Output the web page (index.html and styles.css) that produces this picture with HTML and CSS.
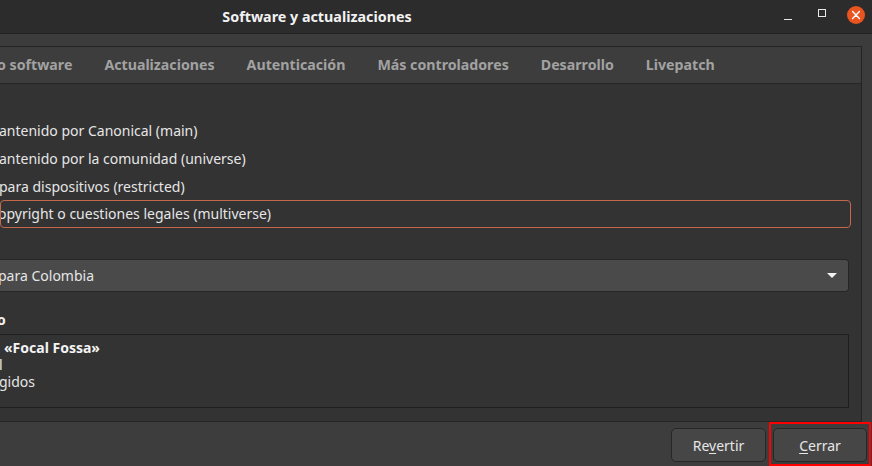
FILE: index.html
```html
<!DOCTYPE html>
<html lang="es">
<head>
<meta charset="utf-8">
<title>Software y actualizaciones</title>
<link rel="stylesheet" href="styles.css">
</head>
<body>
<div class="window">
  <header class="titlebar">
    <div class="title">Software y actualizaciones</div>
    <div class="controls">
      <span class="ctl min"><svg width="10" height="10" viewBox="0 0 10 10"><rect x="1" y="8" width="8" height="1" fill="#e8e8e8"/></svg></span>
      <span class="ctl max"><svg width="10" height="10" viewBox="0 0 10 10"><rect x="1.5" y="1.5" width="7" height="7" fill="none" stroke="#e8e8e8" stroke-width="1"/></svg></span>
      <span class="ctl close"><svg width="18" height="18" viewBox="0 0 18 18"><circle cx="9" cy="9" r="9" fill="#e95420"/><path d="M5.6 5.6 L12.4 12.4 M12.4 5.6 L5.6 12.4" stroke="#ffffff" stroke-width="1.4" stroke-linecap="round"/></svg></span>
    </div>
  </header>
  <main class="body">
    <section class="notebook">
      <nav class="tabs">
        <span class="tab first">o software</span>
        <span class="tab">Actualizaciones</span>
        <span class="tab">Autenticación</span>
        <span class="tab">Más controladores</span>
        <span class="tab">Desarrollo</span>
        <span class="tab">Livepatch</span>
      </nav>
      <div class="page">
        <ul class="components">
          <li class="row"><span class="cut-a">antenido por Canonical (main)</span></li>
          <li class="row"><span class="cut-a">antenido por la comunidad (universe)</span></li>
          <li class="row"><span class="cut-p">para dispositivos (restricted)</span></li>
          <li class="row focused"><span class="cut-o">opyright o cuestiones legales (multiverse)</span></li>
        </ul>
        <div class="combo">
          <span class="cut-p2">para Colombia</span>
          <svg class="arrow" width="10" height="6" viewBox="0 0 10 6"><path d="M0 0 L10 0 L5 5 Z" fill="#f2f2f2"/></svg>
        </div>
        <div class="label"><span class="cut-o2">o</span></div>
        <div class="sources">
          <div class="line strong"><span class="lead">&nbsp;</span>«Focal Fossa»</div>
          <div class="line"><span class="cut-l">l</span></div>
          <div class="line"><span class="cut-g">gidos</span></div>
        </div>
      </div>
    </section>
  </main>
  <footer class="actions">
    <button class="btn">Re<u>v</u>ertir</button>
    <div class="highlight"><button class="btn"><u>C</u>errar</button></div>
  </footer>
</div>
</body>
</html>
```

FILE: styles.css
```css
* { box-sizing: border-box; }
html, body { margin: 0; padding: 0; }
body {
  width: 872px;
  height: 466px;
  overflow: hidden;
  background: #3c3c3c;
  font-family: "Noto Sans", "DejaVu Sans", sans-serif;
  color: #e4e4e4;
}
.window {
  display: flex;
  flex-direction: column;
  width: 872px;
  height: 466px;
}
.titlebar {
  height: 34px;
  flex: none;
  display: flex;
  align-items: center;
  background: #2c2c2c;
  border-bottom: 1px solid #232323;
}
.title {
  width: 634px;
  text-align: center;
  font-weight: 700;
  font-size: 14.3px;
  color: #f2f2f2;
  padding-bottom: 1px;
}
.controls {
  margin-left: auto;
  display: flex;
  align-items: center;
  padding-right: 7px;
}
.ctl { display: flex; align-items: center; justify-content: center; }
.min { width: 10px; height: 10px; margin-right: 24px; position: relative; top: -1px; }
.max { width: 10px; height: 10px; margin-right: 20px; position: relative; top: -4px; }
.close { width: 18px; height: 18px; position: relative; top: -2px; }

.body {
  flex: 1;
  display: flex;
  padding: 12px 10px 0 0;
}
.notebook {
  flex: 1;
  display: flex;
  flex-direction: column;
  border: 1px solid #232323;
  border-left: none;
  border-bottom: 1px solid #262626;
}
.tabs {
  height: 37px;
  flex: none;
  display: flex;
  align-items: center;
  background: #3d3d3d;
  border-bottom: 1px solid #262626;
  font-weight: 700;
  font-size: 14.2px;
  color: #a2a2a2;
  padding-bottom: 1px;
}
.tab { padding: 0 16px; white-space: nowrap; }
.tab.first { padding-left: 0; margin-left: -3px; }

.page {
  flex: 1;
  background: #333333;
  padding: 32px 12px 0 0;
  font-size: 14px;
  color: #e6e6e6;
}
.components { list-style: none; margin: 0; padding: 0; }
.row {
  height: 28px;
  display: flex;
  align-items: center;
  white-space: nowrap;
  margin-right: -2px;
  border-radius: 4px;
}
.row.focused {
  outline: 1px solid #c4694b;
  outline-offset: -1px;
  padding-bottom: 1px;
}
.cut-a { margin-left: -1px; }
.cut-p { margin-left: -1px; }
.cut-o { margin-left: -2px; }
.cut-p2 { margin-left: -2px; }
.cut-o2 { margin-left: -3px; }
.cut-l { margin-left: -1px; }
.cut-g { margin-left: -1px; }

.combo {
  margin-top: 31px;
  height: 33px;
  display: flex;
  align-items: center;
  background: #4a4a4a;
  border: 1px solid #262626;
  border-left: none;
  border-radius: 0 4px 4px 0;
  padding-right: 11px;
}
.arrow { margin-left: auto; margin-top: 1px; }

.label {
  margin-top: 17px;
  height: 22px;
  line-height: 22px;
  font-weight: 700;
  color: #f0f0f0;
}
.sources {
  margin-top: 3px;
  height: 74px;
  border: 1px solid #1f1f1f;
  border-left: none;
  padding-top: 4px;
}
.line { height: 17px; line-height: 17px; white-space: nowrap; }
.line.strong { font-weight: 700; color: #f4f4f4; }
.lead { display: inline-block; width: 4px; }

.actions {
  height: 44px;
  flex: none;
  display: flex;
  justify-content: flex-end;
  align-items: flex-start;
  padding: 6px 1px 0 0;
  background: #3d3d3d;
}
.btn {
  font-family: inherit;
  font-size: 14px;
  color: #e6e6e6;
  background: #464646;
  border: 1px solid #262626;
  border-radius: 5px;
  height: 34px;
  width: 95px;
  padding: 0;
}
.btn u { text-underline-offset: 2px; }
.highlight {
  margin-left: 3px;
  margin-top: -6px;
  padding: 4px 2px 2px 2px;
  border: 2px solid #ff0000;
  height: 44px;
}
.highlight .btn { width: 94px; }
```
